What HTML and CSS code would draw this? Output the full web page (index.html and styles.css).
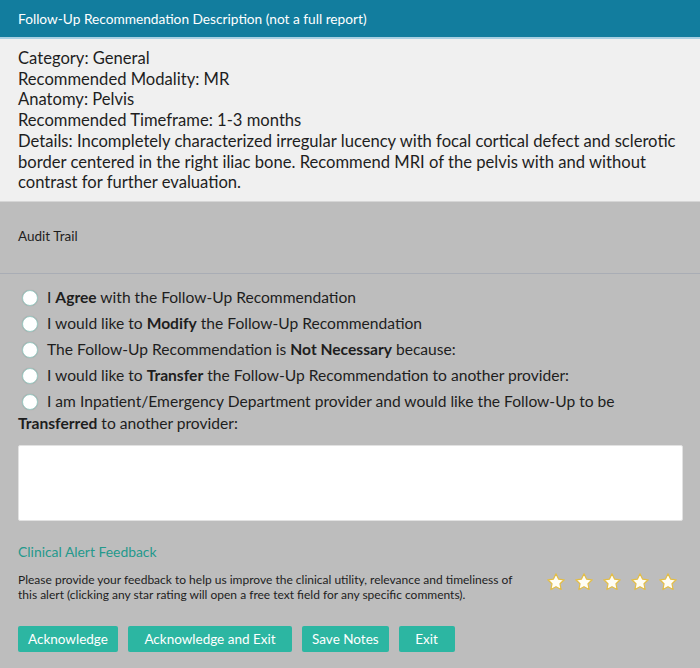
FILE: index.html
```html
<!DOCTYPE html>
<html lang="en">
<head>
    <meta charset="UTF-8">
    <meta name="viewport" content="width=device-width, initial-scale=1.0">
    <title>Follow-Up Recommendation</title>
    <link rel="stylesheet" href="styles.css">
</head>
<body>
    <div class="alert-panel">
        <div class="panel-header">Follow-Up Recommendation Description (not a full report)</div>

        <div class="description">
            <div>Category: General</div>
            <div>Recommended Modality: MR</div>
            <div>Anatomy: Pelvis</div>
            <div>Recommended Timeframe: 1-3 months</div>
            <div>Details: Incompletely characterized irregular lucency with focal cortical defect and sclerotic border centered in the right iliac bone. Recommend MRI of the pelvis with and without contrast for further evaluation.</div>
        </div>

        <div class="audit-trail">Audit Trail</div>

        <div class="response">
            <div class="options">
                <label class="option"><span class="radio"></span>I <b>Agree</b> with the Follow-Up Recommendation</label>
                <label class="option"><span class="radio"></span>I would like to <b>Modify</b> the Follow-Up Recommendation</label>
                <label class="option"><span class="radio"></span>The Follow-Up Recommendation is <b>Not Necessary</b> because:</label>
                <label class="option"><span class="radio"></span>I would like to <b>Transfer</b> the Follow-Up Recommendation to another provider:</label>
                <label class="option"><span class="radio"></span>I am Inpatient/Emergency Department provider and would like the Follow-Up to be <b>Transferred</b> to another provider:</label>
            </div>

            <textarea class="notes"></textarea>

            <div class="feedback-title">Clinical Alert Feedback</div>
            <div class="feedback-row">
                <p class="feedback-text">Please provide your feedback to help us improve the clinical utility, relevance and timeliness of this alert (clicking any star rating will open a free text field for any specific comments).</p>
                <div class="stars">
                    <svg viewBox="0 0 20 20"><path d="M10 1.8l2.5 5.3 5.7.7-4.2 4 1.1 5.7L10 14.7l-5.1 2.8 1.1-5.7-4.2-4 5.7-.7z"/></svg>
                    <svg viewBox="0 0 20 20"><path d="M10 1.8l2.5 5.3 5.7.7-4.2 4 1.1 5.7L10 14.7l-5.1 2.8 1.1-5.7-4.2-4 5.7-.7z"/></svg>
                    <svg viewBox="0 0 20 20"><path d="M10 1.8l2.5 5.3 5.7.7-4.2 4 1.1 5.7L10 14.7l-5.1 2.8 1.1-5.7-4.2-4 5.7-.7z"/></svg>
                    <svg viewBox="0 0 20 20"><path d="M10 1.8l2.5 5.3 5.7.7-4.2 4 1.1 5.7L10 14.7l-5.1 2.8 1.1-5.7-4.2-4 5.7-.7z"/></svg>
                    <svg viewBox="0 0 20 20"><path d="M10 1.8l2.5 5.3 5.7.7-4.2 4 1.1 5.7L10 14.7l-5.1 2.8 1.1-5.7-4.2-4 5.7-.7z"/></svg>
                </div>
            </div>

            <div class="actions">
                <button>Acknowledge</button>
                <button class="btn-wide">Acknowledge and Exit</button>
                <button>Save Notes</button>
                <button class="btn-exit">Exit</button>
            </div>
        </div>
    </div>
</body>
</html>
```

FILE: styles.css
```css
body {
    margin: 0;
    font-family: Lato, "Open Sans", sans-serif;
    background-color: #bdbdbd;
    color: #1e1e1e;
}

.alert-panel {
    width: 700px;
    background-color: #bdbdbd;
}

.panel-header {
    height: 37px;
    line-height: 37px;
    padding-left: 18px;
    background-color: #127d9e;
    border-bottom: 2px solid #a9d0e2;
    color: #fff;
    font-size: 13.7px;
}

.description {
    background-color: #f0f0f0;
    padding: 9px 17px 8px 18px;
    font-size: 16.6px;
    line-height: 20.7px;
    border-bottom: 1px solid #d6d6d6;
}

.audit-trail {
    height: 45px;
    padding: 26px 18px 0;
    font-size: 13.5px;
    line-height: 16px;
    border-bottom: 1px solid #a9adb5;
}

.response {
    padding: 12px 17px 16px 18px;
}

.option {
    display: block;
    font-size: 15.6px;
    line-height: 22px;
    margin-bottom: 4px;
}

.option:last-child {
    margin-bottom: 0;
}

.option b {
    font-weight: bold;
}

.radio {
    display: inline-block;
    width: 14px;
    height: 14px;
    margin: 0 9px 0 4px;
    border: 1px solid #9ccbc4;
    border-radius: 50%;
    background-color: #fff;
    box-shadow: 0 0 1px rgba(0, 0, 0, 0.2);
    vertical-align: -3px;
}

.notes {
    display: block;
    box-sizing: border-box;
    width: 665px;
    height: 76px;
    margin-top: 11px;
    border: 1px solid #e2e2e2;
    border-radius: 2px;
    background-color: #fff;
    resize: none;
}

.feedback-title {
    margin-top: 23px;
    font-size: 13.9px;
    line-height: 16px;
    color: #24998c;
}

.feedback-row {
    display: flex;
    align-items: flex-start;
    justify-content: space-between;
    margin-top: 12px;
}

.feedback-text {
    margin: 0;
    width: 505px;
    font-size: 12px;
    line-height: 15px;
}

.stars {
    display: flex;
    gap: 8px;
    margin-right: 5px;
}

.stars svg {
    width: 20px;
    height: 20px;
    fill: #fffdf4;
    stroke: #e3bd45;
    stroke-width: 1.2;
    stroke-linejoin: round;
}

.actions {
    display: flex;
    gap: 10px;
    margin-top: 24px;
}

.actions button {
    height: 26px;
    padding: 0 10px;
    border: none;
    border-radius: 2px;
    background-color: #2cb6a2;
    color: #fff;
    font-family: Lato, "Open Sans", sans-serif;
    font-size: 13.5px;
    cursor: pointer;
}

.actions .btn-wide {
    padding: 0 16.5px;
}

.actions .btn-exit {
    min-width: 56px;
}
```
